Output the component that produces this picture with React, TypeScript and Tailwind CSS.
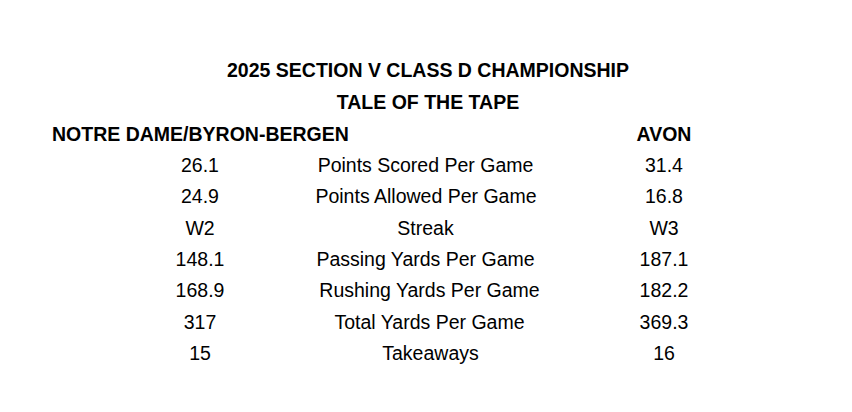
type Stat = {
  home: string;
  label: string;
  away: string;
  // the source doc has uneven padding around a few labels
  nudge: string;
};

const stats: Stat[] = [
  { home: '26.1', label: 'Points Scored Per Game', away: '31.4', nudge: 'pr-[3px]' },
  { home: '24.9', label: 'Points Allowed Per Game', away: '16.8', nudge: 'pr-[2px]' },
  { home: 'W2', label: 'Streak', away: 'W3', nudge: 'pr-[3px]' },
  { home: '148.1', label: 'Passing Yards Per Game', away: '187.1', nudge: 'pr-[3px]' },
  { home: '168.9', label: 'Rushing Yards Per Game', away: '182.2', nudge: 'pl-[5px]' },
  { home: '317', label: 'Total Yards Per Game', away: '369.3', nudge: 'pl-[5px]' },
  { home: '15', label: 'Takeaways', away: '16', nudge: 'pl-[7px]' },
];

export default function App() {
  return (
    <div className="w-[852px] h-[412px] bg-white text-black font-['Liberation_Sans',Arial,sans-serif] text-[19.5px] pt-[54px] overflow-hidden">
      <div className="font-bold leading-[32px] text-center pl-[4px]">2025 SECTION V CLASS D CHAMPIONSHIP</div>
      <div className="font-bold leading-[32px] text-center pl-[4px]">TALE OF THE TAPE</div>

      <div className="grid grid-cols-[200px_254px_220px] pl-[100px] font-bold leading-[32px]">
        <div className="col-span-2 -ml-[48px]">NOTRE DAME/BYRON-BERGEN</div>
        <div className="text-center">AVON</div>
      </div>

      <div className="grid grid-cols-[200px_254px_220px] pl-[100px] leading-[31.33px]">
        {stats.map((s) => (
          <div key={s.label} className="contents">
            <div className="text-center">{s.home}</div>
            <div className={`text-center ${s.nudge}`}>{s.label}</div>
            <div className="text-center">{s.away}</div>
          </div>
        ))}
      </div>
    </div>
  );
}
